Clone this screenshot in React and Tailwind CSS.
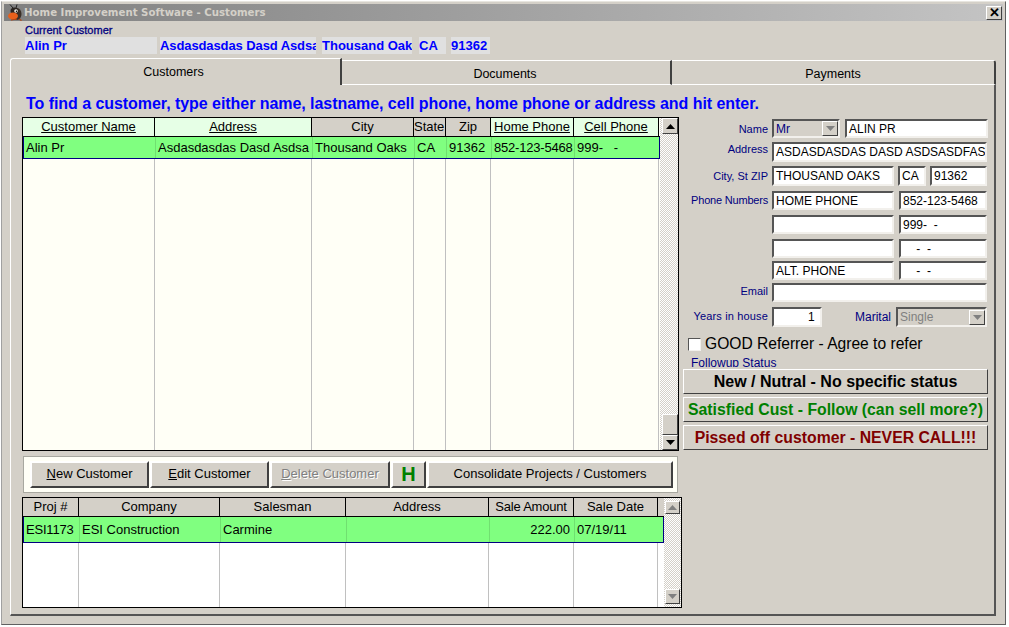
import React from 'react';

const raised = 'border border-t-white border-l-white border-r-[#404040] border-b-[#404040]';
const sunken = 'border-2 border-t-[#555555] border-l-[#555555] border-r-[#f2f0ec] border-b-[#f2f0ec]';

function AntIcon() {
  return (
    <svg width="14" height="17" viewBox="0 0 14 17" className="shrink-0">
      <path d="M5 4 L2 0.5 M8 4 L9 0.5" stroke="#222" strokeWidth="1" fill="none" />
      <ellipse cx="9" cy="10" rx="4.5" ry="6" fill="#3a3028" />
      <ellipse cx="6.5" cy="7" rx="4" ry="3.5" fill="#2a2420" />
      <ellipse cx="5" cy="12" rx="5" ry="3.5" fill="#e8601c" />
      <circle cx="8" cy="7" r="1.8" fill="#f4f0e8" />
      <circle cx="8.4" cy="7.2" r="0.7" fill="#000" />
      <path d="M3 16 L9 15 M11 15 L13.5 16.5" stroke="#b8430e" strokeWidth="1.2" />
    </svg>
  );
}

function Arrow({down, disabled}) {
  return (
    <svg width="9" height="5" viewBox="0 0 9 5">
      <polygon points={down ? '0,0 9,0 4.5,5' : '4.5,0 9,5 0,5'} fill={disabled ? '#808080' : '#000'} />
    </svg>
  );
}

function ScrollBtn({down, disabled, className}) {
  return (
    <div className={`flex items-center justify-center bg-[#d4d0c8] ${raised} ${className}`}>
      <Arrow down={down} disabled={disabled} />
    </div>
  );
}

function Field({className = '', align = 'text-left', children}) {
  return (
    <div className={`h-full bg-white ${sunken} px-[2px] text-[12px] leading-[17px] text-black whitespace-pre overflow-hidden ${align} ${className}`}>
      {children}
    </div>
  );
}

function Combo({className = '', disabled, children}) {
  return (
    <div className={`h-full ${sunken} flex items-center justify-between pl-[2px] text-[12px] bg-[#d4d0c8] ${disabled ? 'text-[#808080]' : 'text-[#000080]'} ${className}`}>
      <span>{children}</span>
      <div className={`w-[16px] h-[15px] flex items-center justify-center bg-[#d4d0c8] ${raised}`}>
        <Arrow down disabled />
      </div>
    </div>
  );
}

function Label({className = 'w-[85px] text-[11px]', children}) {
  return (
    <div className={`shrink-0 text-right text-[#000080] whitespace-nowrap ${className}`}>
      {children}
    </div>
  );
}

function FormRow({className = '', label, labelClass = '', children}) {
  return (
    <div className={`flex items-center gap-[4px] ${className}`}>
      <Label className={`w-[85px] text-[11px] ${labelClass}`}>{label}</Label>
      {children}
    </div>
  );
}

function StatusButton({className, children}) {
  return (
    <div className={`h-[25px] w-[305px] flex items-center justify-center bg-[#d4d0c8] border border-t-white border-l-white border-r-[#404040] border-b-[#404040] font-bold whitespace-nowrap ${className}`}>
      {children}
    </div>
  );
}

function ToolButton({className = '', children}) {
  return (
    <div className={`h-[27px] pb-[2px] flex items-center justify-center bg-[#d4d0c8] border-2 border-t-white border-l-white border-r-[#404040] border-b-[#404040] whitespace-nowrap ${className}`}>
      {children}
    </div>
  );
}

const customerCols = 'grid grid-cols-[132px_157px_102px_32px_45px_83px_85px]';
const projectCols = 'grid grid-cols-[56px_141px_126px_143px_85px_84px]';
const checker = 'bg-[repeating-conic-gradient(#d4d0c8_0_25%,#ffffff_0_50%)] bg-[length:2px_2px]';

function HeadCell({light, underline, className = '', children}) {
  return (
    <div className={`h-[18px] border-r border-black text-center text-[13px] leading-[17px] text-black whitespace-nowrap overflow-hidden ${light ? 'bg-[#e6ffe6]' : 'bg-[#d4d0c8]'} ${underline ? 'underline' : ''} ${className}`}>
      {children}
    </div>
  );
}

function RowCell({className = '', children}) {
  return (
    <div className={`border-r border-[#70e070] px-[2px] text-[13px] text-black whitespace-pre overflow-hidden ${className}`}>
      {children}
    </div>
  );
}

function CustomerTable() {
  return (
    <div className="ml-[11px] flex h-[334px] w-[657px] border border-black bg-[#fffff6]">
      <div className="flex w-[637px] flex-col">
        <div className={`${customerCols} border-b border-black`}>
          <HeadCell light underline>Customer Name</HeadCell>
          <HeadCell light underline>Address</HeadCell>
          <HeadCell>City</HeadCell>
          <HeadCell className="text-left">State</HeadCell>
          <HeadCell>Zip</HeadCell>
          <HeadCell light underline>Home Phone</HeadCell>
          <HeadCell light underline>Cell Phone</HeadCell>
        </div>
        <div className={`${customerCols} h-[22px] border-x border-b border-x-[#000080] border-b-[#000080] bg-[#80ff80] [&>div]:leading-[22px]`}>
          <RowCell>Alin Pr</RowCell>
          <RowCell>Asdasdasdas Dasd Asdsa</RowCell>
          <RowCell>Thousand Oaks</RowCell>
          <RowCell>CA</RowCell>
          <RowCell>91362</RowCell>
          <RowCell className="tracking-[-0.2px]">852-123-5468</RowCell>
          <RowCell className="border-r-0">{'999-   -'}</RowCell>
        </div>
        <div className={`${customerCols} flex-1`}>
          {[0, 1, 2, 3, 4, 5, 6].map((i) => (
            <div key={i} className="border-r border-[#c0c0c0]" />
          ))}
        </div>
      </div>
      <div className={`flex w-[18px] flex-col items-end ${checker}`}>
        <ScrollBtn className="h-[16px] w-[16px]" />
        <div className="flex-1" />
        <div className={`h-[21px] w-[16px] bg-[#d4d0c8] ${raised}`} />
        <ScrollBtn down className="h-[15px] w-[16px]" />
      </div>
    </div>
  );
}

function ProjectTable() {
  return (
    <div className="ml-[11px] mt-[4px] flex h-[111px] w-[660px] border border-black bg-white">
      <div className="flex w-[641px] flex-col">
        <div className="flex h-[19px] border-b border-black bg-[#d4d0c8]">
          <div className={`${projectCols} w-[635px]`}>
            <HeadCell>Proj #</HeadCell>
            <HeadCell>Company</HeadCell>
            <HeadCell>Salesman</HeadCell>
            <HeadCell>Address</HeadCell>
            <HeadCell className="tracking-[-0.2px]">Sale Amount</HeadCell>
            <HeadCell>Sale Date</HeadCell>
          </div>
        </div>
        <div className={`${projectCols} h-[26px] border-x border-b border-x-[#000080] border-b-[#000080] bg-[#80ff80] [&>div]:leading-[26px]`}>
          <RowCell className="tracking-[-0.2px]">ESI1173</RowCell>
          <RowCell>ESI Construction</RowCell>
          <RowCell>Carmine</RowCell>
          <RowCell />
          <RowCell className="pr-[4px] text-right">222.00</RowCell>
          <RowCell className="border-r-0">07/19/11</RowCell>
        </div>
        <div className={`${projectCols} flex-1`}>
          {[0, 1, 2, 3, 4, 5].map((i) => (
            <div key={i} className="border-r border-[#c0c0c0]" />
          ))}
        </div>
      </div>
      <div className={`flex w-[17px] flex-col items-center justify-between py-[3px] ${checker}`}>
        <ScrollBtn disabled className="h-[13px] w-[15px]" />
        <ScrollBtn down disabled className="h-[15px] w-[15px]" />
      </div>
    </div>
  );
}

function CustomerForm() {
  return (
    <div className="flex w-[305px] flex-col pt-[34px]">
      <FormRow className="h-[19px]" label="Name" labelClass="mt-[2px]">
        <Combo className="w-[68px]">Mr</Combo>
        <Field className="ml-px w-[143px]">ALIN PR</Field>
      </FormRow>
      <FormRow className="mt-[4px] h-[20px]" label="Address" labelClass="-mt-[5px]">
        <Field className="w-[215px]">ASDASDASDAS DASD ASDSASDFAS ASD</Field>
      </FormRow>
      <FormRow className="mt-[4px] h-[20px]" label="City, St ZIP">
        <Field className="w-[122px]">THOUSAND OAKS</Field>
        <Field className="w-[28px]">CA</Field>
        <Field className="w-[57px]">91362</Field>
      </FormRow>
      <FormRow className="mt-[5px] h-[19px]" label="Phone Numbers" labelClass="tracking-[-0.2px]">
        <Field className="w-[122px]">HOME PHONE</Field>
        <Field className="ml-px w-[88px]">852-123-5468</Field>
      </FormRow>
      <FormRow className="mt-[5px] h-[19px]" label="">
        <Field className="w-[122px]" />
        <Field className="ml-px w-[88px]">{'999-  -'}</Field>
      </FormRow>
      <FormRow className="mt-[5px] h-[19px]" label="">
        <Field className="w-[122px]" />
        <Field className="ml-px w-[88px]">{'    -  -'}</Field>
      </FormRow>
      <FormRow className="mt-[3px] h-[19px]" label="">
        <Field className="w-[122px]">ALT. PHONE</Field>
        <Field className="ml-px w-[88px]">{'    -  -'}</Field>
      </FormRow>
      <FormRow className="mt-[3px] h-[19px]" label="Email" labelClass="-mt-[2px]">
        <Field className="w-[215px]" />
      </FormRow>
      <FormRow className="mt-[5px] h-[20px]" label="Years in house" labelClass="-mt-[2px] tracking-[0.15px]">
        <Field className="w-[50px]" align="text-right">1&nbsp;</Field>
        <Label className="w-[65px] text-[12px]">Marital</Label>
        <Combo className="ml-px w-[91px]" disabled>Single</Combo>
      </FormRow>
      <div className="ml-[5px] mt-[8px] flex h-[18px] items-center gap-[4px] text-[15.6px] text-black">
        <div className={`h-[13px] w-[13px] bg-white ${sunken} border-[1px]`} />
        GOOD Referrer - Agree to refer
      </div>
      <div className="ml-[8px] mt-[3px] h-[11px] overflow-hidden text-[12px] leading-[14px] text-[#000080]">Followup Status</div>
      <div className="mt-[2px] flex flex-col gap-[3px]">
        <StatusButton className="text-[16px] text-black">New / Nutral - No specific status</StatusButton>
        <StatusButton className="text-[15.8px] text-[#008000]">Satisfied Cust - Follow (can sell more?)</StatusButton>
        <StatusButton className="text-[15.8px] text-[#800000]">Pissed off customer - NEVER CALL!!!</StatusButton>
      </div>
    </div>
  );
}

export default function App() {
  return (
    <div className="h-[627px] w-[1009px] bg-white p-px font-['Liberation_Sans',Arial,sans-serif]">
      <div className="flex h-[624px] w-[1005px] flex-col border border-t-[#e8e6e0] border-l-[#a0a0a0] border-r-[#606060] border-b-[#606060] bg-[#d4d0c8] p-[2px]">
        {/* Title bar */}
        <div className="flex h-[17px] shrink-0 items-center bg-gradient-to-r from-[#808080] to-[#c4c4c4] pl-[4px] pr-[1px]">
          <AntIcon />
          <span className="ml-[2px] font-['DejaVu_Sans',sans-serif] text-[10.2px] font-bold text-[#d4d0c8]">Home Improvement Software - Customers</span>
          <div className={`ml-auto flex h-[14px] w-[16px] items-center justify-center bg-[#d4d0c8] ${raised} text-[13px] font-bold leading-none text-black`}>✕</div>
        </div>

        {/* Current customer */}
        <div className="h-[37px] shrink-0 pl-[21px]">
          <div className="h-[16px] pt-[2px] text-[11px] leading-[14px] text-[#000080] [-webkit-text-stroke:0.3px_#000080]">Current Customer</div>
          <div className="flex h-[17px] text-[13px] font-bold leading-[17px] text-[#0000ff] whitespace-nowrap">
            <div className="w-[132px] overflow-hidden bg-[#e0e0e0]">Alin Pr</div>
            <div className="ml-[3px] w-[156px] overflow-hidden bg-[#e0e0e0] tracking-[-0.1px]">Asdasdasdas Dasd Asdsa</div>
            <div className="ml-[6px] w-[90px] overflow-hidden bg-[#e0e0e0]">Thousand Oaks</div>
            <div className="ml-[7px] w-[27px] overflow-hidden bg-[#e0e0e0]">CA</div>
            <div className="ml-[5px] w-[39px] overflow-hidden bg-[#e0e0e0]">91362</div>
          </div>
        </div>

        {/* Tabs */}
        <div className="ml-[6px] flex h-[27px] w-[986px] shrink-0 text-[12.5px] text-black">
          <div className="flex w-[332px] items-start justify-center rounded-tl-[3px] border-l border-r-2 border-t border-l-white border-r-[#404040] border-t-white pr-[4px] pt-[4px]">Customers</div>
          <div className="mt-[2px] flex w-[330px] items-start justify-center border-b border-r-2 border-t border-b-white border-r-[#404040] border-t-white pr-[2px] pt-[4px]">Documents</div>
          <div className="mt-[2px] flex flex-1 items-start justify-center rounded-tr-[3px] border-b border-r-2 border-t border-b-white border-r-[#404040] border-t-white pt-[4px]">Payments</div>
        </div>

        {/* Panel */}
        <div className="ml-[6px] flex h-[531px] w-[986px] shrink-0 border-b-2 border-l border-r-2 border-b-[#555555] border-l-white border-r-[#555555]">
          <div className="flex w-[672px] shrink-0 flex-col">
            <div className="h-[32px] pl-[15px] pt-[10px] text-[16px] font-bold leading-[18px] tracking-[-0.05px] text-[#0000ff] whitespace-nowrap">
              To find a customer, type either name, lastname, cell phone, home phone or address and hit enter.
            </div>
            <CustomerTable />
            <div className="ml-[12px] mt-[5px] flex h-[37px] w-[655px] items-center gap-px border border-[#a8a8a0] bg-[#fffff6] pl-[6px]">
              <ToolButton className="w-[119px] text-[13px] text-black"><span><u>N</u>ew Customer</span></ToolButton>
              <ToolButton className="w-[119px] text-[13px] text-black"><span><u>E</u>dit Customer</span></ToolButton>
              <ToolButton className="w-[120px] text-[13px] text-[#808080] [text-shadow:1px_1px_0_#fff]"><span><u>D</u>elete Customer</span></ToolButton>
              <ToolButton className="w-[35px] text-[20px] font-bold text-[#008000]">H</ToolButton>
              <ToolButton className="w-[246px] text-[13px] text-black">Consolidate Projects / Customers</ToolButton>
            </div>
            <ProjectTable />
          </div>
          <CustomerForm />
        </div>
      </div>
    </div>
  );
}
